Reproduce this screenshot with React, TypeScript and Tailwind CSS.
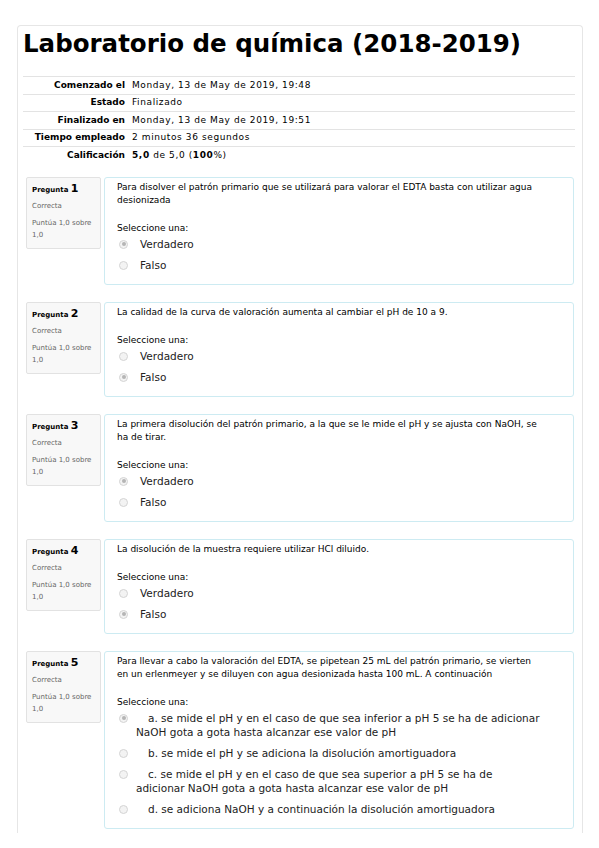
import React from 'react';

type Option = { label: string; checked: boolean };

type Question = {
   num: number;
   text: string[];
   options: Option[];
   multi?: boolean;
};

const summary = [
   { label: 'Comenzado el', value: <>Monday, 13 de May de 2019, 19:48</> },
   { label: 'Estado', value: <>Finalizado</> },
   { label: 'Finalizado en', value: <>Monday, 13 de May de 2019, 19:51</> },
   { label: 'Tiempo empleado', value: <>2 minutos 36 segundos</> },
   {
      label: 'Calificación',
      value: (
         <>
            <b>5,0</b> de 5,0 (<b>100</b>%)
         </>
      ),
   },
];

const questions: Question[] = [
   {
      num: 1,
      text: ['Para disolver el patrón primario que se utilizará para valorar el EDTA basta con utilizar agua desionizada'],
      options: [
         { label: 'Verdadero', checked: true },
         { label: 'Falso', checked: false },
      ],
   },
   {
      num: 2,
      text: ['La calidad de la curva de valoración aumenta al cambiar el pH de 10 a 9.'],
      options: [
         { label: 'Verdadero', checked: false },
         { label: 'Falso', checked: true },
      ],
   },
   {
      num: 3,
      text: ['La primera disolución del patrón primario, a la que se le mide el pH y se ajusta con NaOH, se ha de tirar.'],
      options: [
         { label: 'Verdadero', checked: true },
         { label: 'Falso', checked: false },
      ],
   },
   {
      num: 4,
      text: ['La disolución de la muestra requiere utilizar HCl diluido.'],
      options: [
         { label: 'Verdadero', checked: false },
         { label: 'Falso', checked: true },
      ],
   },
   {
      num: 5,
      multi: true,
      text: [
         'Para llevar a cabo la valoración del EDTA, se pipetean 25 mL del patrón primario, se vierten en un erlenmeyer y se diluyen con agua desionizada hasta 100 mL. A continuación',
      ],
      options: [
         { label: 'a. se mide el pH y en el caso de que sea inferior a pH 5 se ha de adicionar NaOH gota a gota hasta alcanzar ese valor de pH', checked: true },
         { label: 'b. se mide el pH y se adiciona la disolución amortiguadora', checked: false },
         { label: 'c. se mide el pH y en el caso de que sea superior a pH 5 se ha de adicionar NaOH gota a gota hasta alcanzar ese valor de pH', checked: false },
         { label: 'd. se adiciona NaOH y a continuación la disolución amortiguadora', checked: false },
      ],
   },
];

// radio deshabilitado, gris claro
const Radio = ({ checked, multi }: { checked: boolean; multi?: boolean }) => (
   <span
      className={`inline-flex items-center justify-center w-[9px] h-[9px] rounded-full border border-[#d4d4d4] bg-[#f3f3f3] align-middle relative top-[-1px] ${multi ? 'mr-[20px]' : 'mr-[12px]'}`}
   >
      {checked && <span className="w-[4px] h-[4px] rounded-full bg-[#b5b5b5]" />}
   </span>
);

const QuestionBlock = ({ q }: { q: Question }) => (
   <div className="flex gap-[3px] items-start">
      <div className="w-[75px] shrink-0 bg-[#f8f8f8] border border-[#e2e2e2] rounded-[2px] px-[5px] pt-[2px] pb-[7px]">
         <div className="leading-[13px] text-black">
            <span className="text-[7px] font-bold">Pregunta </span>
            <span className="text-[11px] font-bold">{q.num}</span>
         </div>
         <div className="text-[7px] leading-[12px] text-[#666] mt-[3px]">Correcta</div>
         <div className="text-[7px] leading-[12px] text-[#666] mt-[5px]">Puntúa 1,0 sobre 1,0</div>
      </div>
      <div className="flex-1 bg-white border border-[#cdebf2] rounded-[3px] pl-[12px] pr-[30px] pt-[3px] pb-[8px]">
         {q.text.map((t, i) => (
            <p key={i} className="text-[9px] leading-[13px] text-black">
               {t}
            </p>
         ))}
         <div className="text-[9px] leading-[11px] text-black mt-[16px]">Seleccione una:</div>
         <div>
            {q.options.map((o, i) => (
               <div
                  key={i}
                  className="text-[10.5px] leading-[14px] py-[3.5px] pl-[19px] -indent-[17px] text-[#222]"
               >
                  <Radio checked={o.checked} multi={q.multi} />
                  {o.label}
               </div>
            ))}
         </div>
      </div>
   </div>
);

export default function App() {
   return (
      <div className="w-[599px] h-[848px] bg-white pt-[25px] overflow-hidden" style={{ fontFamily: '"DejaVu Sans", Verdana, sans-serif' }}>
         <div className="ml-[17px] w-[566px] h-[808px] border border-b-0 border-[#e6e6e6] rounded-t-[4px] pt-[5px]">
            <h1 className="text-[24.5px] leading-[26px] font-bold text-black pl-[5px]">Laboratorio de química (2018-2019)</h1>

            <div className="mt-[19px] mx-[5px] mr-[7px]">
               {summary.map(row => (
                  <div key={row.label} className="flex items-center h-[17.5px] border-t border-[#e3e3e3] text-[9px] text-black">
                     <div className="w-[109px] text-right font-bold pr-[7px]">{row.label}</div>
                     <div className="tracking-[0.6px]">{row.value}</div>
                  </div>
               ))}
            </div>

            <div className="mt-[13px] px-[8px] flex flex-col gap-[17px]">
               {questions.map(q => (
                  <QuestionBlock key={q.num} q={q} />
               ))}
            </div>
         </div>
      </div>
   );
}
